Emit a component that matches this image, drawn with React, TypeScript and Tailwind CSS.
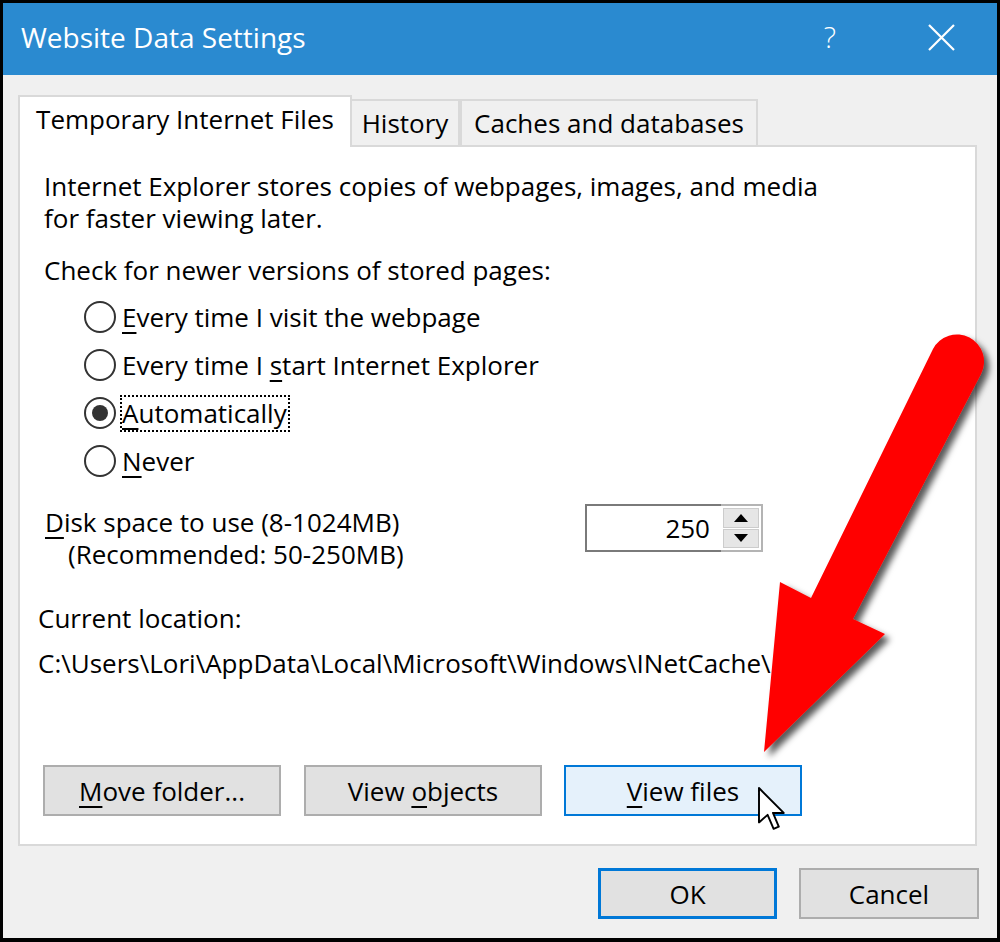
import type { ReactNode } from 'react'

// access-key letter, underlined like a Win32 dialog
function Key({ children }: { children: ReactNode }) {
    return <span className="underline decoration-2 underline-offset-[5px]">{children}</span>
}

function Radio({ checked, focused, children }: { checked?: boolean; focused?: boolean; children: ReactNode }) {
    return (
        <div className="flex h-[48px] items-center">
            <span className="flex h-[32px] w-[32px] shrink-0 items-center justify-center rounded-full border-2 border-[#333] bg-white">
                {checked && <span className="h-[16px] w-[16px] rounded-full bg-[#333]" />}
            </span>
            {focused ? (
                <span className="ml-[4px] border-2 border-dotted border-black pr-[1px] leading-[33px]">{children}</span>
            ) : (
                <span className="ml-[6px]">{children}</span>
            )}
        </div>
    )
}

function Button({ children, kind = 'normal', className = '' }: { children: ReactNode; kind?: 'normal' | 'hover' | 'default'; className?: string }) {
    const look =
        kind === 'hover'
            ? 'border-2 border-[#0078d7] bg-[#e5f1fb]'
            : kind === 'default'
                ? 'border-[3px] border-[#0078d7] bg-[#e1e1e1]'
                : 'border-2 border-[#adadad] bg-[#e1e1e1]'
    return (
        <div className={`flex h-[51px] shrink-0 items-center justify-center text-black ${look} ${className}`}>
            <span>{children}</span>
        </div>
    )
}

function Tab({ active, children, className = '' }: { active?: boolean; children: ReactNode; className?: string }) {
    return active ? (
        <div className={`relative z-10 flex h-[52px] items-center justify-center border-2 border-b-0 border-[#d9d9d9] bg-white pb-[6px] ${className}`}>
            {children}
        </div>
    ) : (
        <div className={`mb-[2px] flex h-[46px] items-center justify-center border-2 border-b-0 border-[#d9d9d9] bg-[#f0f0f0] ${className}`}>
            {children}
        </div>
    )
}

export default function App() {
    return (
        <div className="relative h-[942px] w-[1000px] overflow-hidden border-[3px] border-b-4 border-black font-['Open_Sans','Noto_Sans',sans-serif] text-[26px] leading-[32px] text-black">
            <div className="flex h-full flex-col">
                {/* title bar */}
                <div className="flex h-[72px] shrink-0 items-center bg-[#2a8ad0] pb-[4px] pl-[18px] text-[28px] text-white">
                    <span className="flex-1">Website Data Settings</span>
                    <span className="mr-[92px] font-light text-[29px]">?</span>
                    <svg width="27" height="27" viewBox="0 0 27 27" className="mr-[42px]">
                        <path d="M1 1 L26 26 M26 1 L1 26" stroke="#fff" strokeWidth="2.2" />
                    </svg>
                </div>

                {/* dialog body */}
                <div className="flex flex-1 flex-col bg-[#f0f0f0]">
                    <div className="ml-[15px] mt-[20px] flex h-[52px] items-end">
                        <Tab active className="w-[334px]">Temporary Internet Files</Tab>
                        <Tab className="w-[108px] border-l-0">History</Tab>
                        <Tab className="w-[298px]">Caches and databases</Tab>
                    </div>

                    <div className="ml-[15px] mr-[20px] -mt-[2px] flex h-[701px] flex-col border-2 border-[#d9d9d9] bg-white px-[18px] pt-[23px]">
                        <div className="ml-[6px]">
                            <div className="h-[32px]">Internet Explorer stores copies of webpages, images, and media</div>
                            <div className="h-[32px]">for faster viewing later.</div>
                        </div>
                        <p className="ml-[6px] mt-[20px]">Check for newer versions of stored pages:</p>

                        <div className="ml-[46px] mt-[7px]">
                            <Radio><Key>E</Key>very time I visit the webpage</Radio>
                            <Radio>Every time I <Key>s</Key>tart Internet Explorer</Radio>
                            <Radio checked focused><Key>A</Key>utomatically</Radio>
                            <Radio><Key>N</Key>ever</Radio>
                        </div>

                        <div className="mt-[21px] flex">
                            <div className="w-[547px] shrink-0 pl-[7px]">
                                <div className="h-[32px]"><Key>D</Key>isk space to use (8-1024MB)</div>
                                <div className="h-[32px] pl-[23px]">(Recommended: 50-250MB)</div>
                            </div>
                            <div className="-mt-[2px] flex h-[48px] w-[178px]">
                                <div className="flex flex-1 items-center justify-end border-2 border-r-0 border-[#7a7a7a] bg-white pr-[11px]">
                                    250
                                </div>
                                <div className="flex w-[42px] flex-col gap-[1px] border-2 border-l-0 border-[#b4b4b4] bg-white px-[2px] py-[2px]">
                                    <div className="flex flex-1 items-center justify-center border border-[#cccccc] bg-[#e6e6e6]">
                                        <svg width="14" height="8" viewBox="0 0 14 8"><path d="M7 0 L14 8 L0 8 Z" fill="#000" /></svg>
                                    </div>
                                    <div className="flex flex-1 items-center justify-center border border-[#cccccc] bg-[#e6e6e6]">
                                        <svg width="14" height="8" viewBox="0 0 14 8"><path d="M0 0 L14 0 L7 8 Z" fill="#000" /></svg>
                                    </div>
                                </div>
                            </div>
                        </div>

                        <p className="mt-[32px]">Current location:</p>
                        <p className="mt-[13px]">C:\Users\Lori\AppData\Local\Microsoft\Windows\INetCache\</p>

                        <div className="ml-[5px] mt-[86px] flex">
                            <Button className="w-[238px]"><Key>M</Key>ove folder...</Button>
                            <Button className="ml-[23px] w-[238px]">View <Key>o</Key>bjects</Button>
                            <Button kind="hover" className="ml-[22px] w-[238px]"><Key>V</Key>iew files</Button>
                        </div>
                    </div>

                    <div className="mr-[18px] mt-[22px] flex justify-end gap-[22px]">
                        <Button kind="default" className="w-[179px]">OK</Button>
                        <Button className="w-[180px]">Cancel</Button>
                    </div>
                </div>
            </div>

            {/* red callout arrow drawn over the dialog */}
            <svg className="pointer-events-none absolute -left-[3px] -top-[3px]" width="1000" height="942" viewBox="0 0 1000 942">
                <defs>
                    <filter id="shade" x="-20%" y="-20%" width="140%" height="140%">
                        <feDropShadow dx="5" dy="5" stdDeviation="3" floodColor="#000" floodOpacity="0.65" />
                    </filter>
                </defs>
                <path
                    d="M764 752 L780 582 L811 598 L933 349 A27 27 0 0 1 981 374 L853 619 L885 634 Z"
                    fill="#ff0000"
                    filter="url(#shade)"
                />
                {/* mouse pointer */}
                <g transform="translate(759 788) scale(2.15)">
                    <path d="M0 0 L0 16 L4 12.5 L6.8 19 L9.2 18 L6.5 11.6 L11.5 11.6 Z" fill="#fff" stroke="#000" strokeWidth="0.9" strokeLinejoin="round" />
                </g>
            </svg>
        </div>
    )
}
